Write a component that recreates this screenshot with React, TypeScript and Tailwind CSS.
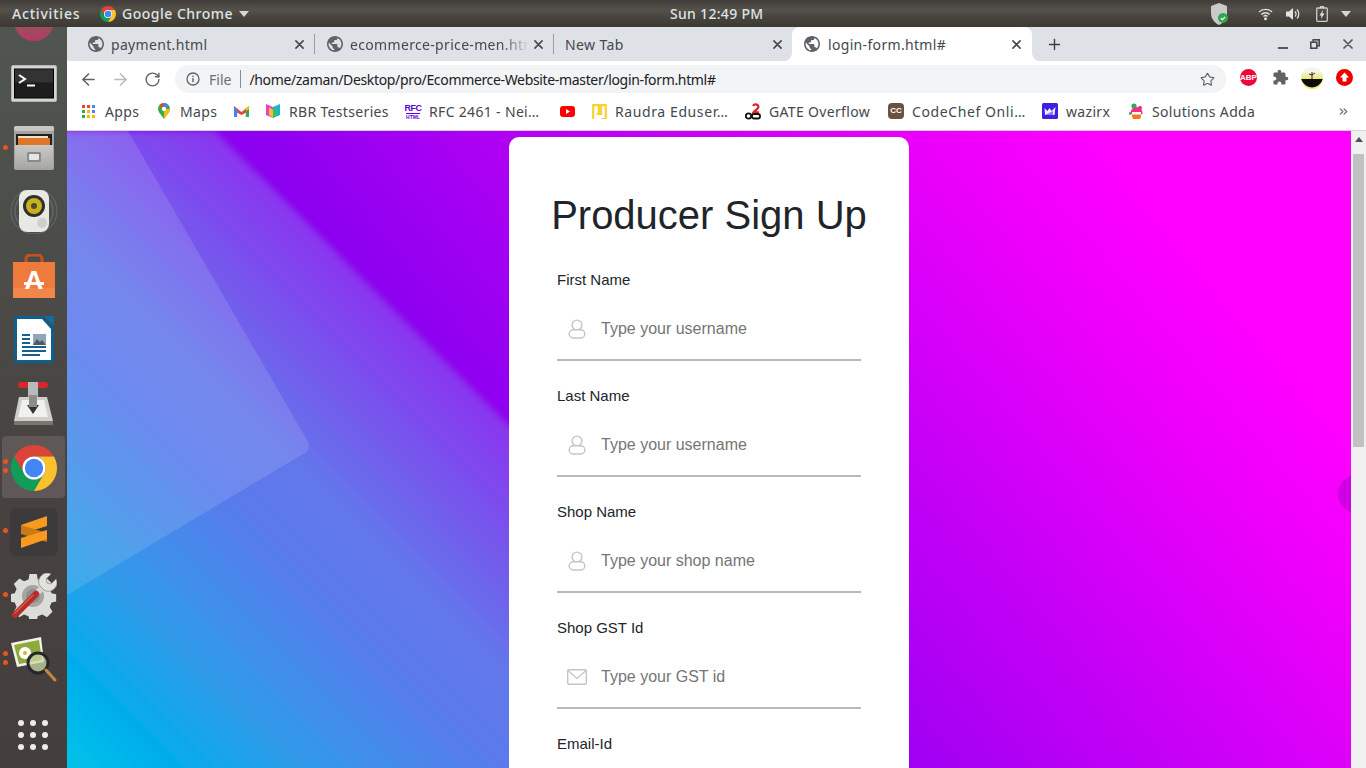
import React from "react";
import { ArrowLeft, ArrowRight, RotateCw, Star, Plus, ChevronsRight } from "lucide-react";

const ui = { fontFamily: '"Noto Sans", "Open Sans", sans-serif' };
const arial = { fontFamily: '"Liberation Sans", Arial, sans-serif' };

function ChromeLogo({ size }: { size: number }) {
  return (
    <svg width={size} height={size} viewBox="2 2 44 44" className="shrink-0">
      <path d="M24 2A22 22 0 0 1 43.05 13H24A11 11 0 0 0 14.47 29.5L4.95 13A22 22 0 0 1 24 2Z" fill="#db4437" />
      <path d="M4.95 13L14.47 29.5A11 11 0 0 0 33.53 29.5L24 46A22 22 0 0 1 4.95 13Z" fill="#0f9d58" />
      <path d="M43.05 13A22 22 0 0 1 24 46L33.53 29.5A11 11 0 0 0 24 13H43.05Z" fill="#fbc02d" />
      <circle cx="24" cy="24" r="11" fill="#fff" />
      <circle cx="24" cy="24" r="8.8" fill="#4285f4" />
    </svg>
  );
}

function Globe() {
  return (
    <svg width="16" height="16" viewBox="2 2 20 20" className="shrink-0" fill="#5f6368">
      <path d="M12 2C6.48 2 2 6.48 2 12s4.48 10 10 10 10-4.48 10-10S17.52 2 12 2zm-1 17.93c-3.95-.49-7-3.85-7-7.93 0-.62.08-1.21.21-1.79L9 15v1c0 1.1.9 2 2 2v1.93zm6.9-2.54c-.26-.81-1-1.39-1.9-1.39h-1v-3c0-.55-.45-1-1-1H8v-2h2c.55 0 1-.45 1-1V7h2c1.1 0 2-.9 2-2v-.41c2.93 1.19 5 4.06 5 7.41 0 2.08-.8 3.97-2.1 5.39z" />
    </svg>
  );
}

function CloseX({ size = 9, color = "#45484c", w = 1.6 }: { size?: number; color?: string; w?: number }) {
  return (
    <svg width={size} height={size} viewBox="0 0 10 10" className="shrink-0">
      <path d="M1 1L9 9M9 1L1 9" stroke={color} strokeWidth={(w * 10) / size} strokeLinecap="round" />
    </svg>
  );
}

function Tab({ title, globe = true, active = false, fade = false, sep = false }: { title: string; globe?: boolean; active?: boolean; fade?: boolean; sep?: boolean }) {
  const box = active
    ? "relative flex h-[34px] w-[240px] shrink-0 items-center rounded-t-lg bg-white pl-3 pr-[11px]"
    : globe
      ? "relative flex h-[34px] w-[239px] shrink-0 items-center pl-[13px] pr-[10px]"
      : "relative flex h-[34px] w-[239px] shrink-0 items-center pl-3 pr-[10px]";
  return (
    <div className={box}>
      {globe ? <Globe /> : null}
      <span
        className={
          active
            ? "ml-2 min-w-0 flex-1 overflow-hidden whitespace-nowrap text-[14px] tracking-[0.33px] text-[#45484c]"
            : fade
              ? "ml-[7px] mr-[5px] min-w-0 flex-1 overflow-hidden whitespace-nowrap text-[14px] tracking-[0.33px] text-[#45484c] [mask-image:linear-gradient(to_right,black_85%,transparent)]"
              : globe
                ? "ml-[7px] min-w-0 flex-1 overflow-hidden whitespace-nowrap text-[14px] tracking-[0.33px] text-[#45484c]"
                : "min-w-0 flex-1 overflow-hidden whitespace-nowrap text-[14px] tracking-[0.4px] text-[#45484c]"
        }
      >
        {title}
      </span>
      <CloseX />
      {sep ? <div className="absolute -right-px top-[7px] h-5 w-px bg-[#9a9da1]" /> : null}
    </div>
  );
}

/* ---------- dock icons ---------- */
function Terminal() {
  return (
    <svg width="46" height="38" viewBox="0 0 46 38">
      <rect x="0.5" y="0.5" width="45" height="36" rx="1.5" fill="#d4d4d2" stroke="#b4b4b2" />
      <rect x="3.5" y="4" width="39" height="29" fill="#1d1d1d" stroke="#000" />
      <rect x="4" y="4.5" width="38" height="13" fill="#333" />
      <path d="M8 10l6 4-6 4" fill="none" stroke="#fff" strokeWidth="2" />
      <path d="M16 20.5h8" stroke="#fff" strokeWidth="2" />
    </svg>
  );
}
function Files() {
  return (
    <svg width="42" height="44" viewBox="0 0 42 44">
      <defs>
        <linearGradient id="fileBody" x1="0" y1="0" x2="0" y2="1"><stop offset="0" stopColor="#c9c9c7" /><stop offset="1" stopColor="#a6a6a4" /></linearGradient>
      </defs>
      <rect x="1" y="0" width="40" height="44" rx="2" fill="#a3a3a1" />
      <rect x="1" y="0" width="40" height="5" rx="2" fill="#c6c6c4" />
      <rect x="3" y="8" width="36" height="15" fill="#23201d" />
      <rect x="5" y="10" width="30" height="4" fill="#f4e2c8" />
      <rect x="5" y="12" width="32" height="8" fill="#e0762a" />
      <path d="M2 19h38v22a2 2 0 0 1-2 2H4a2 2 0 0 1-2-2z" fill="url(#fileBody)" />
      <rect x="14" y="26" width="14" height="10" rx="1.5" fill="#8a8a8a" />
      <rect x="16" y="28" width="10" height="6" rx="1" fill="#e6e6e6" />
    </svg>
  );
}
function Speaker() {
  return (
    <svg width="50" height="44" viewBox="0 0 50 44">
      <circle cx="25" cy="21" r="23" fill="none" stroke="#7f96b5" strokeWidth="1" opacity="0.4" />
      <circle cx="25" cy="21" r="19" fill="none" stroke="#7f96b5" strokeWidth="1.5" opacity="0.35" />
      <rect x="10" y="0" width="30" height="42" rx="8" fill="#e9e9e4" />
      <circle cx="25" cy="16" r="11" fill="#2f2f2b" />
      <circle cx="25" cy="16" r="8" fill="#c9b021" />
      <circle cx="25" cy="16" r="3" fill="#4c4a33" />
      <circle cx="33" cy="33" r="5" fill="#cfcfca" />
    </svg>
  );
}
function Software() {
  return (
    <svg width="42" height="44" viewBox="0 0 42 44">
      <path d="M13 10V5a4 4 0 0 1 4-4h8a4 4 0 0 1 4 4v5" fill="none" stroke="#c94f22" strokeWidth="3" />
      <rect x="0" y="8" width="42" height="36" fill="#ee7a3c" />
      <rect x="0" y="34" width="42" height="10" fill="#f0864a" />
      <text x="21" y="35" textAnchor="middle" fontSize="26" fontWeight="700" fill="#fff" style={arial}>A</text>
      <rect x="11" y="28" width="20" height="3" fill="#fff" />
    </svg>
  );
}
function Writer() {
  return (
    <svg width="40" height="48" viewBox="0 0 40 48">
      <path d="M2 0H28L40 12V44a3 3 0 0 1-3 3H3a3 3 0 0 1-3-3V2a2 2 0 0 1 2-2z" fill="#0d5f8e" />
      <path d="M3 3H28L37 13V44H3z" fill="#fff" />
      <path d="M30 0L40 0V10z" fill="#0d6fa6" />
      <path d="M8 19h8M8 23h8M8 27h8M8 31h24M8 35h24M8 39h18" stroke="#15608f" strokeWidth="2" />
      <rect x="19" y="18" width="13" height="11" fill="#8fa7b8" />
      <path d="M19 29l4-6 3 3 2-2 4 5z" fill="#4c5a64" />
    </svg>
  );
}
function Transmission() {
  return (
    <svg width="42" height="46" viewBox="0 0 42 46">
      <rect x="5" y="1" width="30" height="6" rx="3" fill="#d8262c" />
      <rect x="15" y="1" width="10" height="24" fill="#b9b9b9" />
      <path d="M6 16h28l6 24H1z" fill="#cfcfcb" />
      <path d="M9 19h22l4 17H5z" fill="#f1f1ee" />
      <path d="M14 24h12l-6 9z" fill="#333" />
      <rect x="16" y="14" width="8" height="12" fill="#8d8d8a" />
      <rect x="1" y="40" width="39" height="4" rx="1" fill="#77776f" />
    </svg>
  );
}
function Sublime() {
  return (
    <div className="flex h-12 w-12 items-center justify-center rounded-md bg-[#3c3a3a]">
      <svg width="26" height="32" viewBox="0 0 26 32">
        <path d="M26 0V10L0 18V9z" fill="#f89a1e" />
        <path d="M0 9L26 17V26L0 18z" fill="#c97a14" />
        <path d="M26 14V23L0 32V22z" fill="#f89a1e" />
      </svg>
    </div>
  );
}
function Tools() {
  return (
    <svg width="46" height="46" viewBox="0 0 46 46">
      <path d="M19 0h8l1 6 5 2 5-3 6 6-3 5 2 5 5 1v8l-5 1-2 5 3 5-6 6-5-3-5 2-1 5h-8l-1-5-5-2-5 3-6-6 3-5-2-5-5-1v-8l5-1 2-5-3-5 6-6 5 3 5-2z" fill="#dcdcd8" transform="translate(1 1) scale(0.92)" />
      <circle cx="22" cy="23" r="11" fill="#a4a4a0" />
      <circle cx="22" cy="23" r="7" fill="#8f8f8b" />
      <path d="M24 22L33 13" stroke="#d6d6d2" strokeWidth="6" />
      <path d="M29 13a8.5 8.5 0 0 1 11-12l-5 5 1 4 4 1 5-5a8.5 8.5 0 0 1-12 11z" fill="#e2e2de" stroke="#8f8f8b" strokeWidth="0.8" />
      <path d="M4 42L25 21" stroke="#b52d29" strokeWidth="6.5" strokeLinecap="round" />
      <path d="M4 40L22 22" stroke="#dc5f55" strokeWidth="1.2" strokeLinecap="round" />
    </svg>
  );
}
function Viewer() {
  return (
    <svg width="46" height="46" viewBox="0 0 46 46">
      <path d="M0 6L30 0L33 25L6 30z" fill="#f2f2e8" />
      <path d="M3 8L28 3L31 23L8 27z" fill="#8eaa3a" />
      <circle cx="14" cy="16" r="6" fill="#fff" />
      <circle cx="14" cy="16" r="2" fill="#d8b32c" />
      <circle cx="27" cy="26" r="10" fill="#c9d6a8" fillOpacity="0.75" stroke="#24282a" strokeWidth="3" />
      <path d="M35 33l9 10" stroke="#c28a3a" strokeWidth="3" strokeLinecap="round" />
    </svg>
  );
}

function DockSlot({ children, dots = [], active = false }: { children: React.ReactNode; dots?: string[]; active?: boolean }) {
  return (
    <div className="relative flex h-16 w-full shrink-0 items-center justify-center">
      {active ? <div className="absolute inset-x-[2px] top-0 h-[62px] rounded bg-[#5f5856]" /> : null}
      <div className="relative flex items-center justify-center">{children}</div>
      {dots.map((d) => (
        <span key={d} className={"absolute left-[3px] h-[5px] w-[5px] rounded-full bg-[#e9541f] " + d} />
      ))}
    </div>
  );
}

function Dock() {
  return (
    <aside className="flex h-full w-[67px] shrink-0 flex-col overflow-hidden bg-[linear-gradient(180deg,#50564f_0%,#4b4b47_35%,#474140_65%,#443e3d_100%)]">
      <div className="flex h-[25px] shrink-0 justify-center overflow-hidden">
        <div className="-mt-[27px] h-[41px] w-10 rounded-full bg-[linear-gradient(180deg,#8d5f4e_40%,#b4386a_100%)]" />
      </div>
      <DockSlot><Terminal /></DockSlot>
      <DockSlot dots={["top-[29px]"]}><Files /></DockSlot>
      <DockSlot><Speaker /></DockSlot>
      <DockSlot><Software /></DockSlot>
      <DockSlot><Writer /></DockSlot>
      <DockSlot><Transmission /></DockSlot>
      <DockSlot active dots={["top-[23px]", "top-[32px]"]}><ChromeLogo size={46} /></DockSlot>
      <DockSlot dots={["top-[28px]"]}><Sublime /></DockSlot>
      <DockSlot dots={["top-[28px]"]}><Tools /></DockSlot>
      <DockSlot dots={["top-[23px]", "top-[32px]"]}><Viewer /></DockSlot>
      <div className="ml-[18px] mt-[28px] grid grid-cols-3 justify-items-center gap-x-[6px] gap-y-[6px] self-start">
        {Array.from({ length: 9 }).map((_, i) => (
          <span key={i} className="h-[6px] w-[6px] rounded-full bg-[#ececec]" />
        ))}
      </div>
    </aside>
  );
}

/* ---------- top bar ---------- */
function TopBar() {
  return (
    <header className="flex h-[27px] shrink-0 items-center bg-[linear-gradient(180deg,#3f3c39_0%,#54514a_35%,#45423b_70%,#3b3932_100%)] text-[14px] font-medium text-[#dfe3e6]" style={ui}>
      <span className="ml-3 w-[88px] tracking-[0.8px]">Activities</span>
      <ChromeLogo size={16} />
      <span className="ml-[6px] tracking-[0.5px]">Google Chrome</span>
      <svg width="10" height="6" viewBox="0 0 10 6" className="ml-[6px]"><path d="M0 0h10L5 6z" fill="#d5d8da" /></svg>
      <span className="absolute left-[670px] tracking-[0.3px]">Sun 12:49 PM</span>
      <div className="ml-auto flex items-center">
        <svg width="18" height="22" viewBox="0 0 18 22" className="mr-[30px]">
          <path d="M9 0l8 3v7c0 6-4 10-8 12-4-2-8-6-8-12V3z" fill="#c8cbc9" />
          <circle cx="13" cy="15" r="5" fill="#2fa84a" />
          <path d="M10.8 15l1.6 1.6 2.8-2.8" stroke="#fff" strokeWidth="1.1" fill="none" />
        </svg>
        <svg width="15" height="14" viewBox="0 0 16 14" className="mr-[13px]">
          <path d="M1 5a10 10 0 0 1 14 0M3.5 7.5a6.5 6.5 0 0 1 9 0M5.8 9.7a3.2 3.2 0 0 1 4.4 0" stroke="#dfe3e6" strokeWidth="1.4" fill="none" />
          <circle cx="8" cy="12" r="1.6" fill="#dfe3e6" />
        </svg>
        <svg width="15" height="14" viewBox="0 0 15 14" className="mr-[15px]">
          <path d="M0 4.5h3L7 1v12L3 9.5H0z" fill="#dfe3e6" />
          <path d="M9 4.5a3.5 3.5 0 0 1 0 5M11 2.5a6.5 6.5 0 0 1 0 9" stroke="#dfe3e6" strokeWidth="1.2" fill="none" />
        </svg>
        <svg width="12" height="16" viewBox="0 0 12 16" className="mr-[13px]">
          <rect x="0.7" y="2" width="10.6" height="13.3" rx="1" fill="none" stroke="#c9cdcf" strokeWidth="1.3" />
          <rect x="4" y="0" width="4" height="2" fill="#c9cdcf" />
          <path d="M7 4L3.5 9.5h2L5 13l3.5-5.5h-2z" fill="#dfe3e6" />
        </svg>
        <svg width="10" height="6" viewBox="0 0 10 6" className="mr-[15px]"><path d="M0 0h10L5 6z" fill="#d5d8da" /></svg>
      </div>
    </header>
  );
}

/* ---------- bookmarks ---------- */
const AppsIcon = () => (
  <svg width="13" height="13" viewBox="0 0 13 13" className="shrink-0">
    {[
      [0, 0, "#ea4335"], [5, 0, "#ea4335"], [10, 0, "#4285f4"],
      [0, 5, "#34a853"], [5, 5, "#fbbc05"], [10, 5, "#4285f4"],
      [0, 10, "#34a853"], [5, 10, "#fbbc05"], [10, 10, "#fbbc05"],
    ].map(([x, y, c], i) => (
      <rect key={i} x={x as number} y={y as number} width="3" height="3" fill={c as string} />
    ))}
  </svg>
);
const MapsIcon = () => (
  <svg width="12" height="16" viewBox="0 0 12 16" className="shrink-0">
    <path d="M6 0a6 6 0 0 1 6 6c0 3-3.5 6-6 10C3.5 12 0 9 0 6a6 6 0 0 1 6-6z" fill="#34a853" />
    <path d="M1.5 2A6 6 0 0 1 6 0v6z" fill="#ea4335" />
    <path d="M6 0a6 6 0 0 1 5 3L6 6z" fill="#4285f4" />
    <path d="M12 6c0 3-3.5 6-6 10V6z" fill="#fbbc05" />
    <circle cx="6" cy="6" r="2.2" fill="#fff" />
  </svg>
);
const GmailIcon = () => (
  <svg width="15" height="12" viewBox="0 0 15 12" className="shrink-0">
    <path d="M0 1l7.5 6L15 1v5L7.5 10 0 6z" fill="#ea4335" />
    <rect x="0" y="3" width="3.2" height="9" fill="#4285f4" />
    <rect x="11.8" y="3" width="3.2" height="9" fill="#34a853" />
    <path d="M11.8 3L15 1v3l-3.2 2z" fill="#fbbc05" />
  </svg>
);
const RbrIcon = () => (
  <svg width="16" height="16" viewBox="0 0 16 16" className="shrink-0">
    <path d="M1 1l7 3v11l-7-3z" fill="#e83fd0" />
    <path d="M15 1L8 4v11l7-3z" fill="#17b5d8" />
    <path d="M4 4l4 3v8l-4-3z" fill="#f2c230" />
    <path d="M8 7l4-3v8l-4 3z" fill="#37c15a" />
  </svg>
);
const RfcIcon = () => (
  <div className="flex w-4 shrink-0 flex-col items-center font-bold leading-none tracking-normal text-[#5a00e6]" style={arial}>
    <span className="text-[9px] leading-[10px] tracking-[-0.5px]">RFC</span>
    <span className="border-t border-[#5a00e6] text-[5px] leading-[6px]">HTML</span>
  </div>
);
const YtIcon = () => (
  <svg width="15" height="11" viewBox="0 0 15 11" className="shrink-0">
    <rect width="15" height="11" rx="3" fill="#f00" />
    <path d="M6 3l4 2.5L6 8z" fill="#fff" />
  </svg>
);
const RaudraIcon = () => (
  <svg width="15" height="15" viewBox="0 0 15 15" className="shrink-0">
    <path d="M1.2 15V1.2h5.6V10M9 15h4.8V1.2H9V10H4.5" fill="none" stroke="#fbd034" strokeWidth="2.2" />
  </svg>
);
const GateIcon = () => (
  <svg width="16" height="17" viewBox="0 0 16 17" className="shrink-0">
    <path d="M8 2.8a3 3 0 0 1 5.5 1c0 2-3.5 3.5-5 5.5h5.5" fill="none" stroke="#e0222a" strokeWidth="2.2" />
    <circle cx="3.5" cy="13" r="2.7" fill="none" stroke="#111" strokeWidth="1.8" />
    <rect x="7" y="11" width="8" height="4.5" rx="2" fill="none" stroke="#111" strokeWidth="1.8" />
  </svg>
);
const CcIcon = () => (
  <div className="flex h-4 w-4 shrink-0 items-center justify-center rounded-sm bg-[#6b523f] text-[8px] font-bold tracking-normal text-white" style={arial}>CC</div>
);
const WazirxIcon = () => (
  <svg width="16" height="16" viewBox="0 0 16 16" className="shrink-0">
    <rect width="16" height="16" rx="1.5" fill="#3f1fe0" />
    <path d="M2.5 5l3 3 2-3 2 3 4-4-1 8H3z" fill="#fff" opacity="0.92" />
    <path d="M3 12l8-4v4z" fill="#8f7bf0" />
  </svg>
);
const SolutionsIcon = () => (
  <svg width="15" height="17" viewBox="0 0 15 17" className="shrink-0">
    <circle cx="5" cy="3" r="2.6" fill="#27b14b" />
    <circle cx="11" cy="5" r="2" fill="#e81e8c" />
    <path d="M1.5 10a6 6 0 0 1 12 0v1h-12z" fill="#f02c8f" />
    <rect x="3" y="9" width="9" height="2" fill="#fff" />
    <path d="M2.5 11.5h10L11 16H4z" fill="#f27a1a" />
    <path d="M1 9v3" stroke="#27b14b" strokeWidth="1.5" />
  </svg>
);

const bookmarks: { w: string; icon: React.ReactNode; label?: string; gap: string }[] = [
  { w: "w-[76px]", icon: <AppsIcon />, label: "Apps", gap: "ml-[10px]" },
  { w: "w-[76px]", icon: <MapsIcon />, label: "Maps", gap: "ml-[10px]" },
  { w: "w-[31px]", icon: <GmailIcon />, gap: "" },
  { w: "w-[140px]", icon: <RbrIcon />, label: "RBR Testseries", gap: "ml-[8px]" },
  { w: "w-[155px]", icon: <RfcIcon />, label: "RFC 2461 - Nei…", gap: "ml-[8px]" },
  { w: "w-[32px]", icon: <YtIcon />, gap: "" },
  { w: "w-[153px]", icon: <RaudraIcon />, label: "Raudra Eduser…", gap: "ml-[8px] tracking-[0.6px]" },
  { w: "w-[143px]", icon: <GateIcon />, label: "GATE Overflow", gap: "ml-[8px]" },
  { w: "w-[154px]", icon: <CcIcon />, label: "CodeChef Onli…", gap: "ml-[8px] tracking-[0.6px]" },
  { w: "w-[87px]", icon: <WazirxIcon />, label: "wazirx", gap: "ml-[8px]" },
  { w: "w-[208px]", icon: <SolutionsIcon />, label: "Solutions Adda", gap: "ml-[8px]" },
];

function BookmarkBar() {
  return (
    <div className="flex h-[38px] shrink-0 items-center border-b border-[#d2d3d5] bg-white pb-px pl-[15px] text-[14px] tracking-[0.33px] text-[#45484c]">
      {bookmarks.map((b, i) => (
        <div key={i} className={"flex shrink-0 items-center whitespace-nowrap " + b.w}>
          {b.icon}
          {b.label ? <span className={b.gap}>{b.label}</span> : null}
        </div>
      ))}
      <ChevronsRight size={13} strokeWidth={2} color="#5f6368" />
    </div>
  );
}

/* ---------- browser chrome ---------- */
function TabStrip() {
  return (
    <div className="flex h-[34px] shrink-0 items-center bg-[#dee1e6] pl-2 pr-0">
      <Tab title="payment.html" sep />
      <Tab title="ecommerce-price-men.html" fade sep />
      <Tab title="New Tab" globe={false} />
      <div className="relative">
        <div className="absolute bottom-0 -left-2 h-2 w-2 bg-white"><div className="h-full w-full rounded-br-lg bg-[#dee1e6]" /></div>
        <div className="absolute bottom-0 -right-2 h-2 w-2 bg-white"><div className="h-full w-full rounded-bl-lg bg-[#dee1e6]" /></div>
        <Tab title="login-form.html#" active />
      </div>
      <Plus size={17} strokeWidth={2} color="#3c4043" className="ml-[14px]" />
      <div className="ml-auto flex items-center">
        <div className="h-[2px] w-[10px] translate-y-[4px] bg-[#54575b]" />
        <svg width="10" height="10" viewBox="0 0 10 10" className="ml-[22px]">
          <rect x="3.2" y="0.8" width="6" height="6" fill="none" stroke="#45484c" strokeWidth="1.6" />
          <rect x="0.8" y="3.2" width="6" height="6" fill="#dee1e6" stroke="#45484c" strokeWidth="1.6" />
        </svg>
        <div className="ml-[23px] mr-[13px]"><CloseX size={10} color="#54575b" w={1.7} /></div>
      </div>
    </div>
  );
}

function Toolbar() {
  return (
    <div className="flex h-8 shrink-0 items-start bg-white pl-3 pt-[4px]">
      <ArrowLeft size={19} strokeWidth={2} color="#5f6368" className="mt-[5px]" />
      <ArrowRight size={19} strokeWidth={2} color="#b8babd" className="ml-[13px] mt-[5px]" />
      <RotateCw size={17} strokeWidth={2} color="#5f6368" className="ml-[14px] mt-[6px]" />
      <div className="ml-[14px] flex h-7 w-[1051px] items-center rounded-full bg-[#f1f3f4] pl-[11px] text-[14px]">
        <svg width="14" height="14" viewBox="0 0 14 14" className="shrink-0">
          <circle cx="7" cy="7" r="6" fill="none" stroke="#5f6368" strokeWidth="1.3" />
          <rect x="6.3" y="6" width="1.4" height="4.2" fill="#5f6368" />
          <rect x="6.3" y="3.6" width="1.4" height="1.4" fill="#5f6368" />
        </svg>
        <span className="ml-[9px] text-[#6b6f73]">File</span>
        <div className="ml-[9px] h-[18px] w-px bg-[#8a8d91]" />
        <span className="ml-2 whitespace-nowrap tracking-[-0.34px] text-[#202124]">/home/zaman/Desktop/pro/Ecommerce-Website-master/login-form.html#</span>
        <Star size={15} strokeWidth={1.8} color="#5f6368" className="ml-auto mr-[11px]" />
      </div>
      <div className="ml-[14px] mt-[4px] flex h-[17px] w-[17px] items-center justify-center rounded-full bg-[#f1063c] text-[8px] font-bold text-white" style={arial}>ABP</div>
      <svg width="17" height="17" viewBox="0 0 24 24" fill="#5f6368" className="ml-[15px] mt-[4px]">
        <path d="M20.5 11H19V7c0-1.1-.9-2-2-2h-4V3.5C13 2.12 11.88 1 10.5 1S8 2.12 8 3.5V5H4c-1.1 0-1.99.9-1.99 2v3.8H3.5c1.49 0 2.7 1.21 2.7 2.7s-1.21 2.7-2.7 2.7H2V20c0 1.1.9 2 2 2h3.8v-1.5c0-1.49 1.21-2.7 2.7-2.7 1.49 0 2.7 1.21 2.7 2.7V22H17c1.1 0 2-.9 2-2v-4h1.5c1.38 0 2.5-1.12 2.5-2.5S21.88 11 20.5 11z" />
      </svg>
      <svg width="22" height="22" viewBox="0 0 22 22" className="ml-3 mt-[2px]">
        <defs><linearGradient id="sky" x1="0" y1="0" x2="0" y2="1"><stop offset="0.2" stopColor="#f2f5ee" /><stop offset="0.55" stopColor="#f0e66a" /></linearGradient></defs>
        <circle cx="11" cy="11" r="11" fill="url(#sky)" />
        <path d="M0.3 12h21.4A11 11 0 0 1 0.3 12z" fill="#0c0c0a" />
        <path d="M11 5v7M8 7l3 1 3-2" stroke="#2b2b20" strokeWidth="1" fill="none" />
      </svg>
      <svg width="17" height="17" viewBox="0 0 17 17" className="ml-[13px] mt-[4px]">
        <circle cx="8.5" cy="8.5" r="8.5" fill="#ec0000" />
        <path d="M8.5 3.5L13 8.5H10.5V12.5H6.5V8.5H4z" fill="#fff" />
      </svg>
    </div>
  );
}

/* ---------- page ---------- */
function Wallpaper() {
  return (
    <svg className="absolute inset-0 h-full w-full" viewBox="0 0 1284 637" preserveAspectRatio="none">
      <defs>
        <linearGradient id="base" gradientUnits="userSpaceOnUse" x1="108.6" y1="766.7" x2="1176.4" y2="-129.7">
          <stop offset="0.39" stopColor="#8c00f0" />
          <stop offset="0.75" stopColor="#e800fa" />
          <stop offset="0.86" stopColor="#ff00ff" />
        </linearGradient>
        <linearGradient id="under" gradientUnits="userSpaceOnUse" x1="0" y1="637" x2="462" y2="175">
          <stop offset="0" stopColor="#00c4e8" />
          <stop offset="0.11" stopColor="#00aeec" />
          <stop offset="0.25" stopColor="#2f9be9" />
          <stop offset="0.473" stopColor="#5a7aec" />
          <stop offset="0.574" stopColor="#6278ea" />
          <stop offset="0.847" stopColor="#8a35ee" />
          <stop offset="1" stopColor="#9c20f0" />
        </linearGradient>
        <filter id="soft"><feGaussianBlur stdDeviation="3" /></filter>
      </defs>
      <rect width="1284" height="637" fill="url(#base)" />
      <path d="M148 0L460 312V700H-20V0z" fill="url(#under)" filter="url(#soft)" />
      <path d="M0 0H61L240 309Q246 318 236 323L0 464z" fill="#fff" fillOpacity="0.12" />
      <circle cx="1290" cy="363" r="19" fill="#cf00e4" />
    </svg>
  );
}

function UserIcon() {
  return (
    <svg width="18" height="20" viewBox="0 0 18 20">
      <circle cx="9" cy="6" r="4.9" fill="none" stroke="#c9c3c3" strokeWidth="1.4" />
      <rect x="1.2" y="10.8" width="15.6" height="8.2" rx="4" fill="#fff" stroke="#c9c3c3" strokeWidth="1.4" />
    </svg>
  );
}
function MailIcon() {
  return (
    <svg width="20" height="16" viewBox="0 0 20 16">
      <rect x="0.7" y="0.7" width="18.6" height="14.6" rx="1.2" fill="none" stroke="#c9c3c3" strokeWidth="1.4" />
      <path d="M1 1.5L10 9.5L19 1.5" fill="none" stroke="#c9c3c3" strokeWidth="1.3" />
    </svg>
  );
}

function Field({ label, placeholder, icon }: { label: string; placeholder?: string; icon: React.ReactNode }) {
  return (
    <div className="mb-6">
      <label className="block h-[22px] text-[15px] leading-[22px] text-[#212529]">{label}</label>
      <div className="mt-[7px] flex h-[63px] items-center border-b-2 border-[#bdb8b8]">
        <div className="flex w-11 justify-center pr-[4px]">{icon}</div>
        {placeholder ? <span className="text-[16px] text-[#757575]">{placeholder}</span> : null}
      </div>
    </div>
  );
}

function SignUp() {
  return (
    <div className="relative mx-auto mt-[6px] w-[400px] rounded-[10px] bg-white pt-[54px]" style={arial}>
      <h1 className="whitespace-nowrap text-center text-[40px] font-normal leading-[48px] text-[#212529]">Producer Sign Up</h1>
      <form className="mt-[30px] px-12">
        <Field label="First Name" placeholder="Type your username" icon={<UserIcon />} />
        <Field label="Last Name" placeholder="Type your username" icon={<UserIcon />} />
        <Field label="Shop Name" placeholder="Type your shop name" icon={<UserIcon />} />
        <Field label="Shop GST Id" placeholder="Type your GST id" icon={<MailIcon />} />
        <Field label="Email-Id" icon={<MailIcon />} />
      </form>
    </div>
  );
}

function Scrollbar() {
  return (
    <div className="flex w-[15px] shrink-0 flex-col items-center bg-[#f0f0f0]">
      <svg width="8" height="5" viewBox="0 0 8 5" className="mt-[6px]"><path d="M4 0l4 5H0z" fill="#505050" /></svg>
      <div className="mt-[12px] h-[293px] w-[11px] bg-[#c1c1c1]" />
    </div>
  );
}

export default function App() {
  return (
    <div className="relative flex h-screen w-[1366px] flex-col overflow-hidden" style={ui}>
      <TopBar />
      <div className="flex min-h-0 flex-1">
        <Dock />
        <div className="flex min-w-0 flex-1 flex-col bg-white">
          <TabStrip />
          <Toolbar />
          <BookmarkBar />
          <main className="flex min-h-0 flex-1">
            <div className="relative min-w-0 flex-1 overflow-hidden">
              <Wallpaper />
              <SignUp />
            </div>
            <Scrollbar />
          </main>
        </div>
      </div>
    </div>
  );
}
